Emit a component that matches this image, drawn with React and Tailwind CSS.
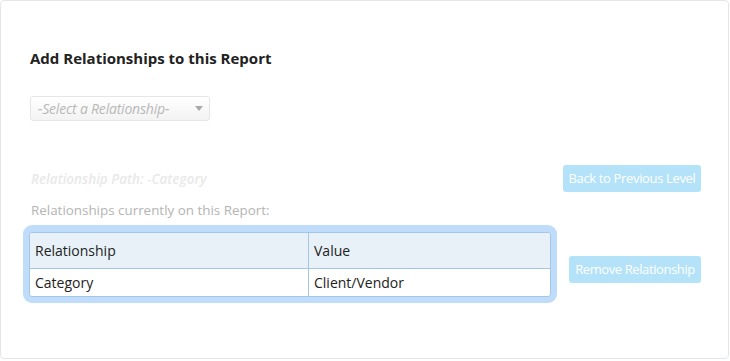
import React from 'react';

const font = { fontFamily: '"Open Sans", "Noto Sans", sans-serif' };

const App = () => {
  return (
    <div className="w-[730px] h-[361px] bg-white" style={font}>
      <div className="w-[729px] h-[359px] border border-[#e3e6e8] rounded-[4px] pl-[29px] pr-[27px] pt-[46px]">
        <h2 className="text-[15px] font-bold text-[#222] leading-[22px]">
          Add Relationships to this Report
        </h2>

        <div className="mt-[27px] w-[180px] h-[25px] border border-[#e6e6e6] rounded-[3px] bg-gradient-to-b from-white to-[#f3f3f3] flex items-center justify-between pl-[7px] pr-[6px]">
          <span className="text-[14px] italic text-[#b8b8b8] tracking-[-0.2px]">-Select a Relationship-</span>
          <span className="w-0 h-0 border-l-[4px] border-r-[4px] border-t-[5px] border-l-transparent border-r-transparent border-t-[#a9a9a9]" />
        </div>

        <div className="mt-[44px] flex items-center justify-between">
          <span className="text-[13.5px] italic font-semibold text-[#e9e9e9] pl-[1px] translate-y-[1px]">Relationship Path: -Category</span>
          <button className="h-[27px] w-[138px] rounded-[3px] bg-[#b4e2f8] text-white text-[13px] tracking-[-0.35px]">
            Back to Previous Level
          </button>
        </div>

        <div className="mt-[9px] text-[13.4px] text-[#b4b4b4] leading-[18px] pl-[1px]">
          Relationships currently on this Report:
        </div>

        <div className="mt-[6px] flex items-start">
          <div className="-ml-[7px] p-[6px] pt-[7px] bg-[#bfddfb] rounded-[9px]">
            <table className="w-[522px] border-separate border-spacing-0 rounded-[3px] bg-white border border-[#a6c6e6] text-[14px] text-[#222]">
              <thead>
                <tr className="bg-[#e8f1f8]">
                  <th className="h-[36px] w-[279px] text-left font-normal pl-[5px] border-r border-b border-[#a6c6e6] rounded-tl-[3px]">Relationship</th>
                  <th className="h-[36px] text-left font-normal pl-[5px] border-b border-[#a6c6e6] rounded-tr-[3px]">Value</th>
                </tr>
              </thead>
              <tbody>
                <tr>
                  <td className="h-[27px] pl-[5px] border-r border-[#a6c6e6]">Category</td>
                  <td className="h-[27px] pl-[5px]">Client/Vendor</td>
                </tr>
              </tbody>
            </table>
          </div>
          <button className="ml-auto mt-[31px] h-[27px] w-[132px] rounded-[3px] bg-[#b4e2f8] text-white text-[13px] tracking-[-0.4px]">
            Remove Relationship
          </button>
        </div>
      </div>
    </div>
  );
};

export default App;
